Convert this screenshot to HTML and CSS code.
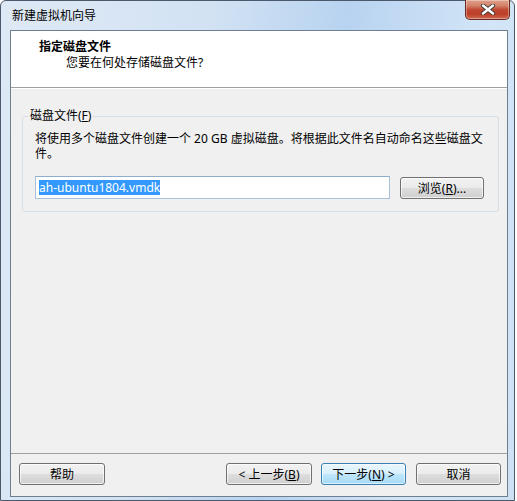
FILE: index.html
```html
<!DOCTYPE html>
<html lang="zh-CN">
<head>
<meta charset="utf-8">
<title>新建虚拟机向导</title>
<link rel="stylesheet" href="styles.css">
</head>
<body>
<div class="window">
  <div class="titlebar">
    <span class="title">新建虚拟机向导</span>
    <button class="close" aria-label="关闭">
      <svg width="18" height="11" viewBox="0 0 18 11">
        <path d="M4 1.5 L14 9.5 M14 1.5 L4 9.5" stroke="#3b3b3b" stroke-width="4.2" stroke-linecap="round"/>
        <path d="M4 1.5 L14 9.5 M14 1.5 L4 9.5" stroke="#ffffff" stroke-width="2.4" stroke-linecap="round"/>
      </svg>
    </button>
  </div>
  <div class="client">
    <div class="header">
      <div class="h-title">指定磁盘文件</div>
      <div class="h-sub">您要在何处存储磁盘文件?</div>
    </div>
    <div class="body">
      <div class="group">
        <span class="group-label">磁盘文件(<u>F</u>)</span>
        <p class="desc">将使用多个磁盘文件创建一个 20 GB 虚拟磁盘。将根据此文件名自动命名这些磁盘文件。</p>
        <div class="file-row">
          <div class="input"><span class="sel">ah-ubuntu1804.vmdk</span></div>
          <button class="btn browse">浏览(<u>R</u>)...</button>
        </div>
      </div>
    </div>
    <div class="footer">
      <button class="btn">帮助</button>
      <div class="spacer"></div>
      <button class="btn">&lt; 上一步(<u>B</u>)</button>
      <button class="btn default">下一步(<u>N</u>) &gt;</button>
      <button class="btn">取消</button>
    </div>
  </div>
</div>
</body>
</html>
```

FILE: styles.css
```css
html, body {
  margin: 0;
  padding: 0;
  background: #ffffff;
}
body {
  width: 517px;
  height: 501px;
  font-family: "Noto Sans", "Noto Sans CJK SC", sans-serif;
  font-size: 12px;
  color: #000;
}
.window {
  box-sizing: border-box;
  width: 515px;
  height: 501px;
  border: 1px solid #4a5a6c;
  border-radius: 6px 6px 0 0;
  background: linear-gradient(100deg, #dfe9f5 0%, #d2e2f3 35%, #b8d3f0 58%, #d3e5f7 82%, #cde1f5 100%);
  padding: 0 6px 3px 9px;
  display: flex;
  flex-direction: column;
}
.titlebar {
  height: 29px;
  display: flex;
  align-items: flex-start;
  justify-content: space-between;
}
.title {
  margin-top: 7px;
  margin-left: 2px;
  line-height: 15px;
}
.close {
  width: 45px;
  height: 20px;
  margin-top: -1px;
  margin-right: -2px;
  padding: 0;
  border: 1px solid #6b2a1f;
  border-top: none;
  border-radius: 0 0 5px 5px;
  background: linear-gradient(#e0a08b 0%, #d4826a 30%, #c04630 52%, #bd3f27 75%, #cf6a52 100%);
  box-shadow: inset 0 0 0 1px rgba(255,255,255,0.35);
  display: flex;
  align-items: center;
  justify-content: center;
}
.client {
  flex: 1;
  box-sizing: border-box;
  border: 1px solid #6e7f91;
  background: #f0f0f0;
  display: flex;
  flex-direction: column;
}
.header {
  box-sizing: border-box;
  height: 57px;
  background: #ffffff;
  border-bottom: 1px solid #a0a0a0;
  padding: 8px 0 0 28px;
}
.h-title {
  font-weight: bold;
  line-height: 15px;
}
.h-sub {
  line-height: 15px;
  margin-top: 1px;
  padding-left: 27px;
}
.body {
  flex: 1;
  padding: 27px 8px 0 11px;
  border-top: 1px solid #ffffff;
}
.group {
  position: relative;
  box-sizing: border-box;
  height: 96px;
  border: 1px solid #d5dfe5;
  border-radius: 3px;
  padding: 14px 10px 0 12px;
}
.group-label {
  position: absolute;
  top: -9px;
  left: 5px;
  padding: 0 2px;
  line-height: 16px;
  background: #f0f0f0;
}
.desc {
  margin: 0;
  width: 452px;
  line-height: 15px;
}
.file-row {
  display: flex;
  align-items: flex-start;
  margin-top: 15px;
}
.input {
  box-sizing: border-box;
  width: 355px;
  height: 23px;
  background: #fff;
  border: 1px solid #a9c1db;
  border-top-color: #8fadcf;
  padding: 3px 3px;
  line-height: 15px;
}
.sel {
  background: #3399ff;
  color: #fff;
  display: inline-block;
  line-height: 15px;
}
.btn {
  box-sizing: border-box;
  width: 85px;
  height: 22px;
  padding: 0;
  font-family: inherit;
  font-size: 12px;
  line-height: 15px;
  color: #000;
  border: 1px solid #707070;
  border-radius: 3px;
  background: linear-gradient(#f2f2f2 0%, #ebebeb 48%, #dddddd 52%, #cfcfcf 100%);
  box-shadow: inset 0 0 0 1px rgba(255,255,255,0.7);
}
.btn u { text-decoration: underline; }
.browse {
  width: 84px;
  margin-left: 10px;
  margin-top: 1px;
}
.btn.default {
  border-color: #3c7fb1;
  background: linear-gradient(#eaf6fd 0%, #d9f0fc 48%, #bee6fd 52%, #a7d9f5 100%);
  box-shadow: inset 0 0 0 1px rgba(255,255,255,0.6);
}
.footer {
  display: flex;
  align-items: flex-start;
  height: 43px;
  box-sizing: border-box;
  border-top: 1px solid #a0a0a0;
  padding: 9px 6px 0 8px;
  gap: 10px;
}
.footer .btn:first-child {
  width: 86px;
}
.spacer { flex: 1; }
.footer .btn:nth-child(3) {
  width: 86px;
  margin-right: -1px;
}
```
